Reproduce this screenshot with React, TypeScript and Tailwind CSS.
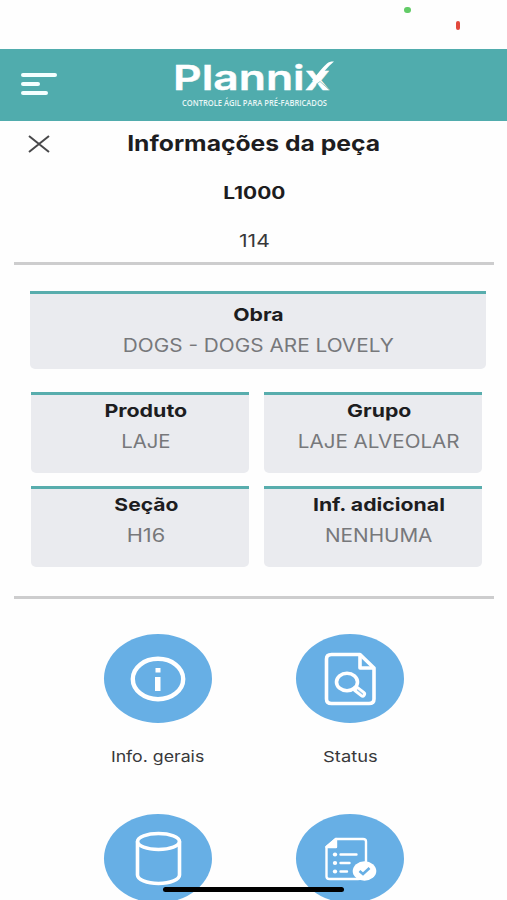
import React from 'react';

interface CardProps {
  title: string;
  value: string;
  titleClass: string;
  valueClass: string;
}

const InfoCard: React.FC<CardProps> = ({ title, value, titleClass, valueClass }) => (
  <div className="h-[81px] rounded-b-[5px] border-t-[3px] border-[#58adad] bg-[#eaebef] pl-3 text-center text-[18px] leading-[31px]">
    <div className="h-[31px] whitespace-nowrap font-bold text-[#1d1d1f]">
      <span className={`inline-block ${titleClass}`}>{title}</span>
    </div>
    <div className="flex h-[31px] justify-center whitespace-nowrap text-[#77787b]">
      <span className={`inline-block ${valueClass}`}>{value}</span>
    </div>
  </div>
);

const InfoIcon = () => (
  <svg className="h-[90px] w-[108px]" viewBox="0 0 108 90" fill="none">
    <ellipse cx="54" cy="45" rx="25.2" ry="20.2" stroke="white" strokeWidth="4.4" />
    <path d="M51.500 34h5v4.500h-5zM51 43h5.500v14H51z" fill="white" />
  </svg>
);

const StatusIcon = () => (
  <svg className="h-[90px] w-[108px]" viewBox="0 0 108 90" fill="none" stroke="white" strokeWidth="3.6" strokeLinejoin="round">
    <path d="M35.500 20.500h28.500l14 13.500v31q0 4.500-5 4.500H35.500q-5 0-5-4.500V25q0-4.500 5-4.500z" />
    <path d="M64 20.500v13.500h14" />
    <ellipse cx="51" cy="48" rx="10.5" ry="8.7" />
    <path d="M60 55l6.500 5" strokeWidth="7" strokeLinecap="round" />
    <path d="M61.500 56l5 4" stroke="#8fc5ee" strokeWidth="1.3" strokeLinecap="round" />
  </svg>
);

const CylinderIcon = () => (
  <svg className="h-[90px] w-[108px]" viewBox="0 0 108 90" fill="none" stroke="white" strokeWidth="3.6">
    <ellipse cx="54.5" cy="27.5" rx="21" ry="8" />
    <path d="M33.500 27.500v33.500c0 4.500 9 8.500 21 8.500s21-4 21-8.500V27.500" />
  </svg>
);

const ChecklistIcon = () => (
  <svg className="h-[90px] w-[108px]" viewBox="0 0 108 90" fill="none" stroke="white" strokeWidth="2.4">
    <path d="M40 25h27q3 0 3 2.500v27c0 7-2 10.500-8 10.500H33.500q-3 0-3-2.500V33z" />
    <path d="M30.500 33l9.500-8v8z" fill="white" strokeLinejoin="round" />
    <path d="M44.500 40.500h16M44.500 49h9M44.500 57.500h6.500" strokeLinecap="round" />
    <g fill="white" stroke="none">
      <ellipse cx="39" cy="40.5" rx="2.2" ry="2" />
      <ellipse cx="39" cy="49" rx="2.2" ry="2" />
      <ellipse cx="39" cy="57.5" rx="2.2" ry="2" />
      <ellipse cx="68.5" cy="57" rx="11.8" ry="9.7" />
    </g>
    <path d="M63.500 57l3.500 3 6.500-6" stroke="#67afe5" strokeWidth="2.6" />
  </svg>
);

interface ActionProps {
  icon: React.ReactNode;
  label?: string;
  labelClass?: string;
}

const Action: React.FC<ActionProps> = ({ icon, label, labelClass }) => (
  <button className="flex h-[180px] w-[108px] flex-col items-center">
    <span className="h-[89px] w-[108px] rounded-[50%] bg-[#67afe5]">{icon}</span>
    {label && (
      <span className="mt-[24px] whitespace-nowrap text-[15px] leading-5 text-[#38383a]">
        <span className={`inline-block ${labelClass}`}>{label}</span>
      </span>
    )}
  </button>
);

const Logo = () => (
  <svg className="h-[71px] w-[162px]" viewBox="0 -8 162 71">
    <text x="-1" y="32" fill="white" textLength="157" lengthAdjust="spacingAndGlyphs" className="font-['Inter'] text-[34px] font-semibold" stroke="white" strokeWidth="0.4">
      Plannix
    </text>
    {/* check mark swoosh over the upper arm of the x */}
    <path d="M138 23c6-8 10-13 15-17.500 2-1.500 3-2 7-2-7 6-12 12-17 20z" fill="white" />
    <path d="M142 26.500l4-3 9 8" stroke="#50acad" strokeWidth="0.6" fill="none" />
    <text x="8" y="48" fill="#e9f6f6" textLength="145" lengthAdjust="spacingAndGlyphs" className="font-['Open_Sans'] text-[8.5px] font-semibold">
      CONTROLE ÁGIL PARA PRÉ-FABRICADOS
    </text>
  </svg>
);

export default function App() {
  return (
    <div className="relative h-[900px] w-[507px] overflow-hidden bg-[#fefefe] font-['Inter',sans-serif]">
      <div className="relative h-[49px]">
        <span className="absolute left-[404px] top-[7px] h-[6px] w-[7px] rounded-full bg-[#62cb67]" />
        <span className="absolute left-[456px] top-[21px] h-[9px] w-[4px] rounded-[2px] bg-[#e2493d]" />
      </div>

      <header className="grid h-[72px] grid-cols-[174px_162px_1fr] bg-[#50acad]">
        <div className="flex flex-col gap-[5px] pl-[21px] pt-[24px]">
          <span className="h-[4px] w-[36px] rounded-full bg-[#f4ffff]" />
          <span className="h-[4px] w-[19px] rounded-full bg-[#f4ffff]" />
          <span className="h-[4px] w-[27px] rounded-full bg-[#f4ffff]" />
        </div>
        <div className="pt-px">
          <Logo />
        </div>
      </header>

      <section className="mx-[14px] h-[144px] w-[480px] border-b-[3px] border-[#cdcdce] text-center">
        <div className="grid h-[46px] grid-cols-[50px_1fr_51px] items-center">
          <svg className="ml-[14px] h-[18px] w-[22px]" viewBox="0 0 22 18" stroke="#48484a" strokeWidth="2" fill="none">
            <path d="M1 1l20 16M21 1L1 17" />
          </svg>
          <h1 className="whitespace-nowrap text-[21px] font-bold text-[#1d1d1f]">
            <span className="inline-block scale-x-[1.175]">Informações da peça</span>
          </h1>
        </div>
        <div className="h-[52px] text-[17px] font-bold leading-[53px] text-[#1d1d1f]">
          <span className="inline-block scale-x-[1.23]">L1000</span>
        </div>
        <div className="h-[44px] text-[17px] leading-[45px] text-[#38383a]">
          <span className="inline-block scale-x-[1.24]">114</span>
        </div>
      </section>

      <section className="h-[331px] pt-[26px]">
        <div className="ml-[30px] h-[78px] w-[456px] rounded-b-[5px] border-t-[3px] border-[#58adad] bg-[#eaebef] pt-[5px] text-center text-[18px] leading-[31px]">
          <div className="font-bold text-[#1d1d1f]">
            <span className="inline-block scale-x-[1.18]">Obra</span>
          </div>
          <div className="text-[#77787b]">
            <span className="inline-block scale-x-[1.155]">DOGS - DOGS ARE LOVELY</span>
          </div>
        </div>
        <div className="ml-[31px] mt-[23px] grid grid-cols-[218px_218px] gap-x-[15px] gap-y-[13px]">
          <InfoCard title="Produto" value="LAJE" titleClass="scale-x-[1.19]" valueClass="scale-x-[1.13]" />
          <InfoCard title="Grupo" value="LAJE ALVEOLAR" titleClass="scale-x-[1.18]" valueClass="scale-x-[1.145]" />
          <InfoCard title="Seção" value="H16" titleClass="scale-x-[1.17]" valueClass="scale-x-[1.21]" />
          <InfoCard title="Inf. adicional" value="NENHUMA" titleClass="scale-x-[1.18]" valueClass="scale-x-[1.15]" />
        </div>
      </section>

      <section className="mx-[14px] w-[480px] border-t-[3px] border-[#cdcdce] pt-[35px]">
        <div className="ml-[90px] grid grid-cols-[108px_108px] gap-x-[84px]">
          <Action icon={<InfoIcon />} label="Info. gerais" labelClass="scale-x-[1.18]" />
          <Action icon={<StatusIcon />} label="Status" labelClass="scale-x-[1.22]" />
          <Action icon={<CylinderIcon />} />
          <Action icon={<ChecklistIcon />} />
        </div>
      </section>

      <div className="absolute left-[163px] top-[887px] h-[5px] w-[181px] rounded-full bg-black" />
    </div>
  );
}
